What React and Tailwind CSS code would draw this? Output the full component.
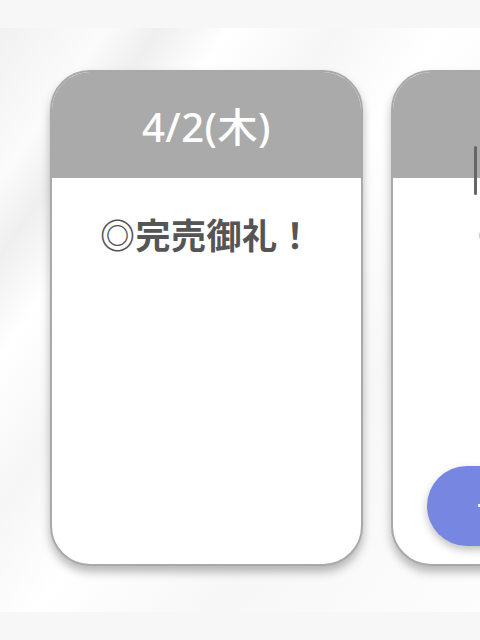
import React from 'react';

const days = [
    { date: '4/2(木)', note: '◎完売御礼！', booking: false },
    { date: '4/3(金)', note: 'ー残席ー', booking: true },
];

function DayCard({ date, note, booking }) {
    return (
        <div className="relative shrink-0 w-[313px] h-[496px] rounded-[40px] border-2 border-[#a9a9a9] bg-white overflow-hidden shadow-[0_6px_10px_rgba(0,0,0,0.28)] flex flex-col">
            <div className="h-[106px] bg-[#aaaaaa] flex items-center justify-center pt-[4px]">
                <span className="text-[40px] font-medium text-white tracking-[0.5px]">{date}</span>
            </div>
            <div className="flex-1 flex flex-col items-center pt-[38px]">
                <p className="text-[35px] font-bold text-[#555555] leading-[40px] tracking-[0.5px]">{note}</p>
            </div>
            {booking && (
                <>
                    <div className="absolute left-[81px] top-[74px] w-[3px] h-[49px] rounded-full bg-[#666666]" />
                    <button className="absolute left-[34px] top-[394px] w-[204px] h-[80px] rounded-full bg-[#7686e1] text-white text-[26px] font-bold shadow-[0_4px_8px_rgba(0,0,0,0.25)]">
                        予約する
                    </button>
                </>
            )}
        </div>
    );
}

export default function App() {
    return (
        <div
            className="w-[480px] h-[640px] overflow-hidden flex flex-col"
            style={{ fontFamily: '"Noto Sans", "Noto Sans CJK JP", sans-serif' }}
        >
            <div className="h-[28px] bg-[#f7f7f7]" />
            <div className="h-[584px] bg-[linear-gradient(125deg,#f1f1f1_0%,#fbfbfb_12%,#efefef_18%,#ffffff_26%,#f6f6f6_38%,#ffffff_50%,#f7f7f7_70%,#fdfdfd_100%)] flex gap-[28px] pl-[50px] pt-[42px] overflow-hidden">
                {days.map((d) => (
                    <DayCard key={d.date} {...d} />
                ))}
            </div>
            <div className="h-[28px] bg-[#f7f7f7]" />
        </div>
    );
}
